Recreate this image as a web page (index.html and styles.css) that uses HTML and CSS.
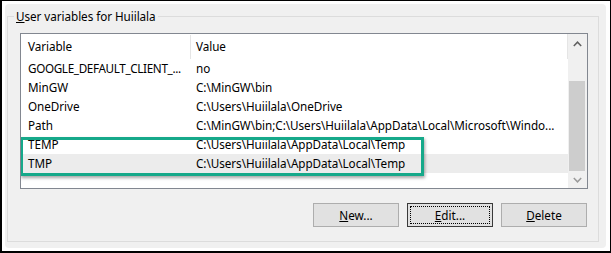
FILE: index.html
```html
<!DOCTYPE html>
<html>
<head>
<meta charset="utf-8">
<link rel="stylesheet" href="styles.css">
</head>
<body>
<div class="frame">
  <div class="panel">
    <div class="group">
      <span class="legend"><u>U</u>ser variables for Huiilala</span>
      <div class="list">
        <div class="table">
          <div class="head">
            <div class="col1 hcol1">Variable</div>
            <div class="col2">Value</div>
          </div>
          <div class="row"><div class="col1 tight">GOOGLE_DEFAULT_CLIENT_...</div><div class="col2">no</div></div>
          <div class="row"><div class="col1">MinGW</div><div class="col2">C:\MinGW\bin</div></div>
          <div class="row"><div class="col1">OneDrive</div><div class="col2">C:\Users\Huiilala\OneDrive</div></div>
          <div class="row"><div class="col1">Path</div><div class="col2">C:\MinGW\bin;C:\Users\Huiilala\AppData\Local\Microsoft\Windo...</div></div>
          <div class="row"><div class="col1">TEMP</div><div class="col2">C:\Users\Huiilala\AppData\Local\Temp</div></div>
          <div class="row selected"><div class="col1">TMP</div><div class="col2">C:\Users\Huiilala\AppData\Local\Temp</div></div>
        </div>
        <div class="scrollbar">
          <div class="sbtn">
            <svg width="9" height="6" viewBox="0 0 9 6"><polyline points="0.8,5 4.5,1.2 8.2,5" fill="none" stroke="#606060" stroke-width="1.5"/></svg>
          </div>
          <div class="track"><div class="thumb"></div></div>
          <div class="sbtn">
            <svg width="9" height="6" viewBox="0 0 9 6"><polyline points="0.8,1 4.5,4.8 8.2,1" fill="none" stroke="#9a9a9a" stroke-width="1.5"/></svg>
          </div>
        </div>
        <div class="highlight"></div>
      </div>
      <div class="buttons">
        <button class="btn"><u>N</u>ew...</button>
        <button class="btn focused"><span class="focus-ring"><u>E</u>dit...</span></button>
        <button class="btn"><u>D</u>elete</button>
      </div>
    </div>
  </div>
</div>
</body>
</html>
```

FILE: styles.css
```css
html, body {
  margin: 0;
  padding: 0;
  background: #ffffff;
}

body {
  font-family: "Noto Sans", "Open Sans", sans-serif;
  font-size: 11.7px;
  letter-spacing: -0.05px;
  color: #000000;
}

.frame {
  box-sizing: border-box;
  width: 611px;
  height: 253px;
  border-style: solid;
  border-color: #000000;
  border-width: 1px 1px 2px 2px;
  background: #ffffff;
  padding: 3px 4px 3px 3px;
  display: flex;
}

.panel {
  flex: 1;
  background: #f0f0f0;
  border-radius: 4px;
  padding: 12px 7px 6px 2px;
  display: flex;
}

.group {
  flex: 1;
  position: relative;
  border: 1px solid #dcdcdc;
  display: flex;
  flex-direction: column;
  padding: 16px 10px 14px 12px;
}

.legend {
  position: absolute;
  left: 6px;
  top: -9px;
  padding: 0 2px;
  line-height: 16px;
  background: #f0f0f0;
  white-space: nowrap;
}

.list {
  position: relative;
  height: 156px;
  box-sizing: border-box;
  border: 1px solid #828790;
  background: #ffffff;
  display: flex;
  overflow: hidden;
}

.table {
  flex: 1;
  display: flex;
  flex-direction: column;
}

.head {
  display: flex;
  height: 25px;
  line-height: 24px;
  border-right: 1px solid #e5e5e5;
}

.row {
  display: flex;
  height: 19px;
  line-height: 19px;
  white-space: nowrap;
}

.row.selected {
  background: #ececec;
}

.col1 {
  box-sizing: border-box;
  width: 170px;
  flex: none;
  padding-left: 7px;
  overflow: hidden;
  white-space: nowrap;
}

.tight {
  letter-spacing: -0.35px;
}

.hcol1 {
  border-right: 1px solid #e5e5e5;
  margin: 1px 0 0 0;
  line-height: 23px;
}

.col2 {
  flex: 1;
  padding-left: 5px;
  overflow: hidden;
  white-space: nowrap;
}

.scrollbar {
  width: 19px;
  flex: none;
  background: #f0f0f0;
  display: flex;
  flex-direction: column;
}

.sbtn {
  height: 17px;
  flex: none;
  display: flex;
  align-items: center;
  justify-content: center;
  padding-top: 3px;
  box-sizing: border-box;
}

.sbtn:last-child {
  padding-top: 1px;
}

.track {
  flex: 1;
  display: flex;
  flex-direction: column;
}

.thumb {
  margin: 30px 2px 0 1px;
  flex: 1;
  background: #cdcdcd;
}

.highlight {
  position: absolute;
  left: -1px;
  top: 103px;
  width: 404px;
  height: 39px;
  box-sizing: border-box;
  border: 3px solid #16a98a;
  box-shadow: 1px 2px 3px rgba(0, 0, 0, 0.35);
  pointer-events: none;
}

.buttons {
  margin-top: 14px;
  display: flex;
  justify-content: flex-end;
  gap: 8px;
  padding-right: 1px;
}

.btn {
  box-sizing: border-box;
  width: 86px;
  height: 24px;
  border: 1px solid #adadad;
  background: #e1e1e1;
  font-family: "Noto Sans", "Open Sans", sans-serif;
  font-size: 11.7px;
  color: #000000;
  padding: 0;
  margin: 0;
  display: flex;
  align-items: center;
  justify-content: center;
}

.btn.focused {
  border-color: #3a3a3a;
  padding: 2px;
}

.focus-ring {
  box-sizing: border-box;
  width: 100%;
  height: 100%;
  border: 1px dotted #000000;
  display: flex;
  align-items: center;
  justify-content: center;
}

u {
  text-decoration: underline;
  text-underline-offset: 1px;
}
```
